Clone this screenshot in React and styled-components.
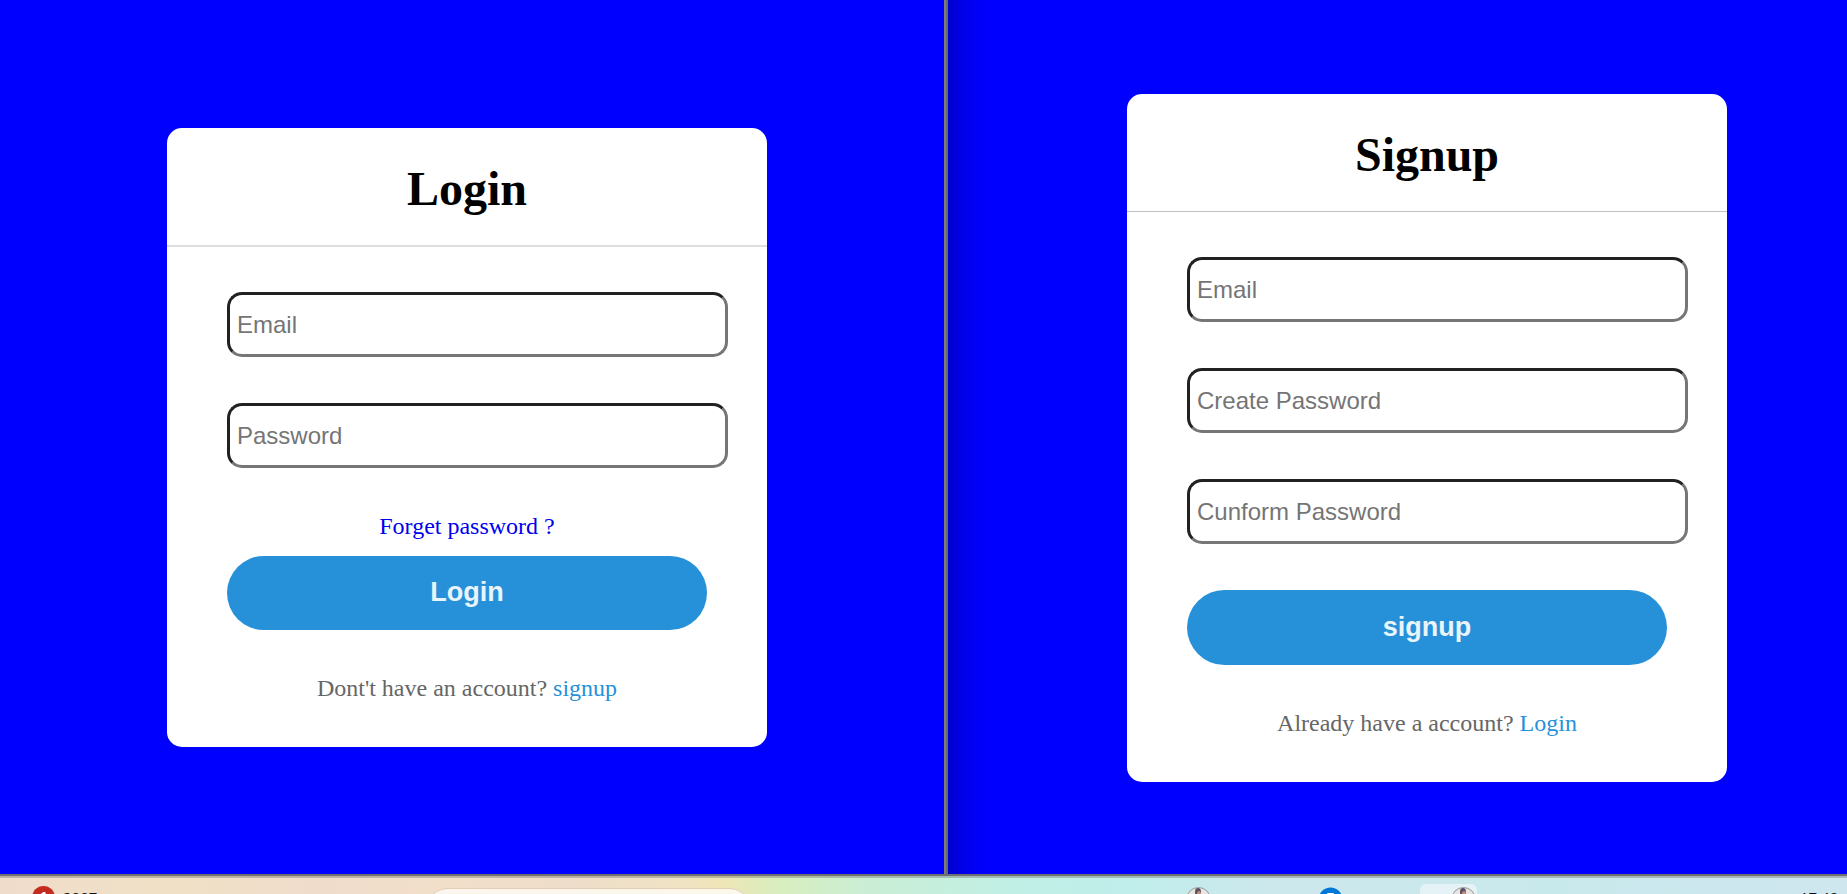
import React from "react";
import styled, { createGlobalStyle } from "styled-components";

const GlobalStyle = createGlobalStyle`
  *, *::before, *::after { box-sizing: border-box; }
  body {
    margin: 0;
    background: #0000ff;
    font-family: "Liberation Serif", "Times New Roman", serif;
  }
`;

const Desktop = styled.div`
  display: flex;
  flex-direction: column;
  height: 100vh;
  min-height: 760px;
  overflow: hidden;
`;

const Windows = styled.main`
  display: grid;
  grid-template-columns: minmax(0, 944fr) 4px minmax(0, 899fr);
  flex: 1;
  min-height: 0;
`;

const Pane = styled.section`
  display: flex;
  align-items: center;
  justify-content: center;
  min-width: 0;
  padding: ${(p) => p.$padding};
  background: ${(p) =>
    p.$shaded
      ? "linear-gradient(90deg, #0000cf 0, #0000e8 14px, #0000fa 32px, #0000ff 52px)"
      : "#0000ff"};
`;

const Divider = styled.div`
  background: #696969;
  border-left: 2px solid #7b7b7b;
`;

const Card = styled.div`
  width: 600px;
  overflow: hidden;
  background: #fff;
  border-radius: 15px;
`;

const Title = styled.h1`
  margin: 0;
  padding: 33px 0 28px;
  border-bottom: ${(p) => p.$rule};
  color: #000;
  font-size: 48px;
  line-height: 56px;
  font-weight: 700;
  text-align: center;
`;

const Form = styled.form`
  display: flex;
  flex-direction: column;
  padding: 45px 39px 45px 60px;
`;

const Field = styled.input`
  width: 100%;
  height: 65px;
  margin: 0 0 46px;
  padding: 0 7px;
  background: #fff;
  border: 3px solid;
  border-color: #212121 #767676 #767676 #212121;
  border-radius: 15px;
  font-family: "Liberation Sans", Arial, sans-serif;
  font-size: 24px;
  outline: none;

  &::placeholder {
    color: #757575;
    opacity: 1;
  }
`;

const ForgotLink = styled.a`
  align-self: center;
  margin: 0 21px 17px 0;
  color: #0000ee;
  font-size: 24px;
  line-height: 25px;
  text-decoration: none;
`;

const Submit = styled.button`
  height: ${(p) => p.$height};
  margin: 0 21px 44px 0;
  padding: 0 0 1px;
  background: #2691d9;
  border: 0;
  border-radius: 38px;
  color: #e9f4fb;
  font-family: "Liberation Sans", Arial, sans-serif;
  font-size: 27px;
  font-weight: 700;
  cursor: pointer;
`;

const Prompt = styled.p`
  margin: 0 21px 0 0;
  color: #666;
  font-size: 24px;
  line-height: 28px;
  text-align: center;
`;

const PromptLink = styled.a`
  color: #2691d9;
  text-decoration: none;
`;

const Taskbar = styled.footer`
  display: flex;
  align-items: flex-start;
  flex: none;
  height: 20px;
  padding: 2px 7px 0 32px;
  overflow: hidden;
  border-top: 2px solid #707070;
  background: linear-gradient(rgba(95, 95, 95, 0.35) 0 2px, transparent 2px),
    linear-gradient(
      90deg,
      #f0dccb 0%,
      #f0e1c6 9%,
      #f0dccb 17%,
      #f2dfca 24%,
      #eeddca 31%,
      #f0e3c4 37%,
      #efe5b6 39%,
      #d9eebe 42%,
      #caeed5 47%,
      #c0efe6 55%,
      #bfeeeb 61%,
      #cde8ed 69%,
      #c8e9ec 84%,
      #cfe6ef 100%
    );
  font-family: "Open Sans", "Noto Sans", sans-serif;
  font-size: 15px;
  line-height: 20px;
  color: #111;
`;

const Badge = styled.span`
  width: 23px;
  height: 23px;
  margin-top: 8px;
  border-radius: 50%;
  background: #c42b1c;
  color: #fff;
  font-weight: 700;
  text-align: center;
`;

const WidgetText = styled.span`
  width: 40px;
  margin: 9px 0 0 8px;
`;

const Search = styled.input`
  width: 327px;
  height: 46px;
  flex: none;
  margin: 10px 0 0 322px;
  border: 1px solid #e2cfb8;
  border-radius: 23px;
  background: linear-gradient(90deg, #fcf5ee, #fcf8e9);
`;

const Apps = styled.div`
  display: flex;
  align-items: flex-start;
  margin-left: auto;
`;

const AppButton = styled.button`
  display: flex;
  justify-content: ${(p) => (p.$active ? "flex-end" : "center")};
  width: ${(p) => (p.$active ? "57px" : "25px")};
  height: 50px;
  flex: none;
  margin: 6px ${(p) => p.$after} 0 0;
  padding: 3px ${(p) => (p.$active ? "1px" : "0")} 0 0;
  border: 0;
  border-radius: 6px;
  background: ${(p) => (p.$active ? "#e5f3f6" : "transparent")};
`;

const Clock = styled.time`
  width: 40px;
  margin-top: 9px;
`;

function AvatarIcon() {
  return (
    <svg width="25" height="25" viewBox="0 0 25 25" aria-hidden="true">
      <circle cx="12.5" cy="12.5" r="12" fill="#e8e5e3" stroke="#999" />
      <ellipse cx="12" cy="5" rx="3" ry="4" fill="#5b5060" />
      <ellipse cx="13" cy="7" rx="2" ry="3" fill="#c08f77" />
    </svg>
  );
}

function BlueAppIcon() {
  return (
    <svg width="25" height="25" viewBox="0 0 25 25" aria-hidden="true">
      <circle cx="12.5" cy="12.5" r="12" fill="#0078d7" />
      <rect x="9" y="6" width="7" height="10" rx="1" fill="#fff" />
    </svg>
  );
}

export default function App() {
  const stay = (event) => event.preventDefault();

  return (
    <>
      <GlobalStyle />
      <Desktop>
        <Windows>
          <Pane $padding="1px 10px 0 0">
            <Card>
              <Title $rule="2px solid #dedede">Login</Title>
              <Form onSubmit={stay}>
                <Field type="email" placeholder="Email" aria-label="Email" />
                <Field type="password" placeholder="Password" aria-label="Password" />
                <ForgotLink href="#forgot">Forget password ?</ForgotLink>
                <Submit type="submit" $height="74px">Login</Submit>
                <Prompt>
                  Dont't have an account? <PromptLink href="#signup">signup</PromptLink>
                </Prompt>
              </Form>
            </Card>
          </Pane>
          <Divider />
          <Pane $padding="2px 0 0 59px" $shaded>
            <Card>
              <Title $rule="1px solid #c0c0c0">Signup</Title>
              <Form onSubmit={stay}>
                <Field type="email" placeholder="Email" aria-label="Email" />
                <Field type="password" placeholder="Create Password" aria-label="Create Password" />
                <Field type="password" placeholder="Cunform Password" aria-label="Cunform Password" />
                <Submit type="submit" $height="75px">signup</Submit>
                <Prompt>
                  Already have a account? <PromptLink href="#login">Login</PromptLink>
                </Prompt>
              </Form>
            </Card>
          </Pane>
        </Windows>
        <Taskbar>
          <Badge>1</Badge>
          <WidgetText>2007</WidgetText>
          <Search type="search" aria-label="Search" />
          <Apps>
            <AppButton aria-label="Browser profile" $after="107px">
              <AvatarIcon />
            </AppButton>
            <AppButton aria-label="Editor" $after="77px">
              <BlueAppIcon />
            </AppButton>
            <AppButton aria-label="Active browser" $active $after="323px">
              <AvatarIcon />
            </AppButton>
          </Apps>
          <Clock>17:40</Clock>
        </Taskbar>
      </Desktop>
    </>
  );
}
